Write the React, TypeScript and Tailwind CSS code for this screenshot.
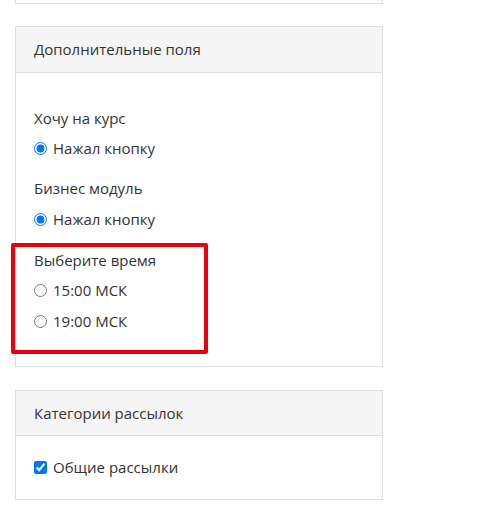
import React from "react";

const font = { fontFamily: '"Open Sans", "Noto Sans", sans-serif' };

function Radio({ checked, label }: { checked?: boolean; label: string }) {
  return (
    <label className="flex items-center h-[20px] text-[15px] text-[#333]">
      <input type="radio" defaultChecked={checked} className="m-0 mr-[6px] w-[13px] h-[13px] accent-[#0075ff]" />
      <span>{label}</span>
    </label>
  );
}

export default function App() {
  return (
    <div className="bg-white w-[499px] h-[526px] overflow-hidden" style={font}>
      <div className="pl-[15px] w-[383px]">
        <div className="h-[4px] border-x border-b border-[#dddddd]" />
        <div className="mt-[22px] border border-[#dddddd] relative">
          <div className="h-[46px] bg-[#f5f5f5] border-b border-[#dddddd] flex items-center pl-[18px] text-[15px] text-[#333]">
            Дополнительные поля
          </div>
          <div className="pl-[18px] pt-[35px] pb-[35px] flex flex-col">
            <div className="h-[20px] leading-[20px] text-[15px] text-[#333]">Хочу на курс</div>
            <div className="mt-[10px]"><Radio checked label="Нажал кнопку" /></div>
            <div className="mt-[20px] h-[20px] leading-[20px] text-[15px] text-[#333]">Бизнес модуль</div>
            <div className="mt-[11px]"><Radio checked label="Нажал кнопку" /></div>
            <div className="mt-[21px] h-[20px] leading-[20px] text-[15px] text-[#333]">Выберите время</div>
            <div className="mt-[10px]"><Radio label="15:00 МСК" /></div>
            <div className="mt-[11px]"><Radio label="19:00 МСК" /></div>
          </div>
          <div className="absolute left-[-5px] top-[216px] w-[197px] h-[111px] border-[4px] border-[#e8000b] rounded-[2px]" />
        </div>
        <div className="mt-[23px] border border-[#dddddd]">
          <div className="h-[45px] bg-[#f5f5f5] border-b border-[#dddddd] flex items-center pl-[18px] text-[15px] text-[#333]">
            Категории рассылок
          </div>
          <div className="pl-[18px] pt-[21px] pb-[22px]">
            <label className="flex items-center h-[20px] text-[15px] text-[#333]">
              <input type="checkbox" defaultChecked className="m-0 mr-[6px] w-[13px] h-[13px] accent-[#0075ff]" />
              <span>Общие рассылки</span>
            </label>
          </div>
        </div>
      </div>
    </div>
  );
}
